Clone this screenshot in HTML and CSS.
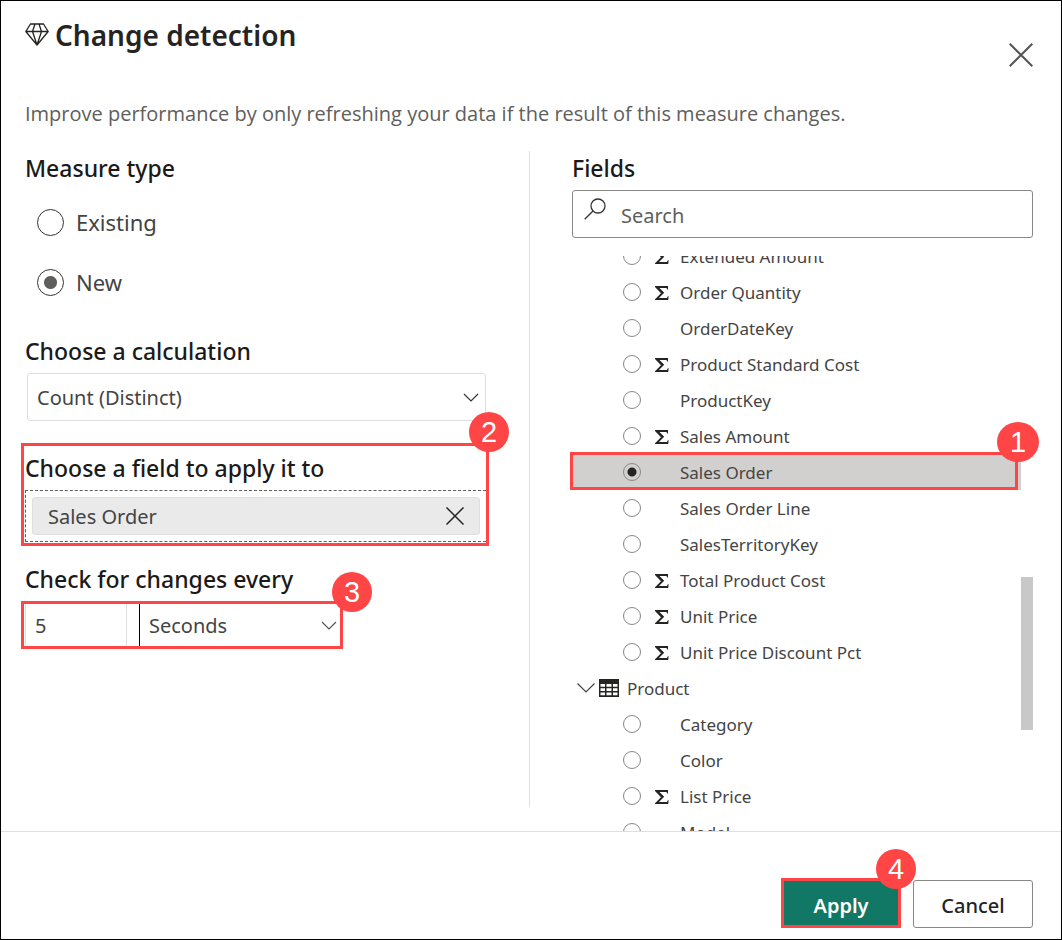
FILE: index.html
```html
<!DOCTYPE html>
<html lang="en">
<head>
<meta charset="utf-8">
<title>Change detection</title>
<link rel="stylesheet" href="styles.css">
</head>
<body>
<main class="dialog">
  <header class="header">
    <div class="title-group">
      <svg class="gem" viewBox="0 0 24 24" fill="none" stroke="#252423" stroke-width="1.3" stroke-linejoin="round"><path d="M5.500 1h13L23.200 8.500 12 22 .8 8.500zM.8 8.500h22.400M10 1 7.500 8.500 12 22M14 1l2.500 7.500L12 22"/></svg>
      <h1 class="title">Change detection</h1>
    </div>
    <button class="close" type="button" aria-label="Close"><svg viewBox="0 0 24 24" fill="none" stroke="#555" stroke-width="2"><path d="M.7.7l22.600 22.600M23.300.7.7 23.300"/></svg></button>
  </header>
  <p class="intro">Improve performance by only refreshing your data if the result of this measure changes.</p>

  <div class="body">
    <form class="settings">
      <section class="section measure" role="radiogroup" aria-labelledby="measure-heading">
        <h2 class="heading" id="measure-heading">Measure type</h2>
        <div class="options">
          <label class="option"><input class="radio" type="radio" name="measure">Existing</label>
          <label class="option"><input class="radio" type="radio" name="measure" checked>New</label>
        </div>
      </section>
      <section class="section calculation">
        <label class="heading" for="calc">Choose a calculation</label>
        <div class="dropdown boxed">
          <select class="select" id="calc"><option>Count (Distinct)</option></select>
          <svg class="chevron" viewBox="0 0 16 9" fill="none" stroke="#333" stroke-width="1.2"><path d="M1 1l7 7 7-7"/></svg>
        </div>
      </section>
      <section class="section target">
        <h2 class="heading">Choose a field to apply it to</h2>
        <div class="dropzone">
          <div class="chip">
            <span>Sales Order</span>
            <button class="chip-remove" type="button" aria-label="Remove Sales Order"><svg viewBox="0 0 18 18" fill="none" stroke="#252423" stroke-width="1.500"><path d="M.5.5l17 17M17.500.5l-17 17"/></svg></button>
          </div>
        </div>
        <div class="callout around-target"><span class="badge">2</span></div>
      </section>
      <section class="section interval">
        <label class="heading" for="every">Check for changes every</label>
        <div class="interval-row">
          <input class="amount" id="every" type="text" value="5">
          <div class="dropdown units">
            <select class="select" aria-label="Unit"><option>Seconds</option></select>
            <svg class="chevron" viewBox="0 0 16 9" fill="none" stroke="#555" stroke-width="1.2"><path d="M1 1l7 7 7-7"/></svg>
          </div>
          <div class="callout around-interval"><span class="badge">3</span></div>
        </div>
      </section>
    </form>

    <section class="fields">
      <label class="heading" for="search">Fields</label>
      <div class="search">
        <svg class="search-icon" viewBox="0 0 22 22" fill="none" stroke="#333" stroke-width="1.3"><circle cx="14" cy="8" r="7"/><path d="M9 13 .7 21.300"/></svg>
        <input class="search-input" id="search" type="text" placeholder="Search">
      </div>
      <div class="viewport">
        <div class="list">
          <label class="field"><input class="radio small" type="radio" name="field"><svg class="sigma" viewBox="0 0 14 14"><path d="M0 0h13v3.500h-.8L11.500 2H4.500l4.700 4.800L4 12h7.900l1-1.800h.8L13.200 14H0v-.8l6-6L0 .9z"/></svg><span>Extended Amount</span></label>
          <label class="field"><input class="radio small" type="radio" name="field"><svg class="sigma" viewBox="0 0 14 14"><path d="M0 0h13v3.500h-.8L11.500 2H4.500l4.700 4.800L4 12h7.900l1-1.800h.8L13.200 14H0v-.8l6-6L0 .9z"/></svg><span>Order Quantity</span></label>
          <label class="field"><input class="radio small" type="radio" name="field"><i class="sigma"></i><span>OrderDateKey</span></label>
          <label class="field"><input class="radio small" type="radio" name="field"><svg class="sigma" viewBox="0 0 14 14"><path d="M0 0h13v3.500h-.8L11.500 2H4.500l4.700 4.800L4 12h7.900l1-1.800h.8L13.200 14H0v-.8l6-6L0 .9z"/></svg><span>Product Standard Cost</span></label>
          <label class="field"><input class="radio small" type="radio" name="field"><i class="sigma"></i><span>ProductKey</span></label>
          <label class="field"><input class="radio small" type="radio" name="field"><svg class="sigma" viewBox="0 0 14 14"><path d="M0 0h13v3.500h-.8L11.500 2H4.500l4.700 4.800L4 12h7.900l1-1.800h.8L13.200 14H0v-.8l6-6L0 .9z"/></svg><span>Sales Amount</span></label>
          <label class="field selected"><input class="radio small" type="radio" name="field" checked><i class="sigma"></i><span>Sales Order</span><span class="callout around-field"><span class="badge">1</span></span></label>
          <label class="field"><input class="radio small" type="radio" name="field"><i class="sigma"></i><span>Sales Order Line</span></label>
          <label class="field"><input class="radio small" type="radio" name="field"><i class="sigma"></i><span>SalesTerritoryKey</span></label>
          <label class="field"><input class="radio small" type="radio" name="field"><svg class="sigma" viewBox="0 0 14 14"><path d="M0 0h13v3.500h-.8L11.500 2H4.500l4.700 4.800L4 12h7.900l1-1.800h.8L13.200 14H0v-.8l6-6L0 .9z"/></svg><span>Total Product Cost</span></label>
          <label class="field"><input class="radio small" type="radio" name="field"><svg class="sigma" viewBox="0 0 14 14"><path d="M0 0h13v3.500h-.8L11.500 2H4.500l4.700 4.800L4 12h7.900l1-1.800h.8L13.200 14H0v-.8l6-6L0 .9z"/></svg><span>Unit Price</span></label>
          <label class="field"><input class="radio small" type="radio" name="field"><svg class="sigma" viewBox="0 0 14 14"><path d="M0 0h13v3.500h-.8L11.500 2H4.500l4.700 4.800L4 12h7.900l1-1.800h.8L13.200 14H0v-.8l6-6L0 .9z"/></svg><span>Unit Price Discount Pct</span></label>
          <button class="group" type="button" aria-expanded="true">
            <svg class="group-chevron" viewBox="0 0 18 10" fill="none" stroke="#444" stroke-width="1.2"><path d="M.5.5 9 9 17.500.5"/></svg>
            <svg class="table-icon" viewBox="0 0 20 18"><path fill="#252423" d="M0 0h20v18H0z"/><path fill="#fff" d="M1.500 5H6v2.700H1.500zm6 0h5v2.700h-5zm6.500 0h4.500v2.700H14zM1.500 9.200H6v2.700H1.500zm6 0h5v2.700h-5zm6.500 0h4.500v2.700H14zM1.500 13.500H6v2.700H1.500zm6 0h5v2.700h-5zm6.500 0h4.500v2.700H14z"/></svg>
            <span>Product</span>
          </button>
          <label class="field"><input class="radio small" type="radio" name="field"><i class="sigma"></i><span>Category</span></label>
          <label class="field"><input class="radio small" type="radio" name="field"><i class="sigma"></i><span>Color</span></label>
          <label class="field"><input class="radio small" type="radio" name="field"><svg class="sigma" viewBox="0 0 14 14"><path d="M0 0h13v3.500h-.8L11.500 2H4.500l4.700 4.800L4 12h7.900l1-1.800h.8L13.200 14H0v-.8l6-6L0 .9z"/></svg><span>List Price</span></label>
          <label class="field"><input class="radio small" type="radio" name="field"><i class="sigma"></i><span>Model</span></label>
        </div>
        <div class="track"><div class="thumb"></div></div>
      </div>
    </section>
  </div>

  <footer class="footer">
    <div class="apply-wrap">
      <button class="button primary" type="button">Apply</button>
      <div class="callout around-apply"><span class="badge">4</span></div>
    </div>
    <button class="button" type="button">Cancel</button>
  </footer>
</main>
</body>
</html>
```
FILE: styles.css
```css
* { box-sizing: border-box; }
body {
  margin: 0;
  font-family: "Noto Sans", "Open Sans", sans-serif;
  font-size: 20px;
  color: #444;
  background: #fff;
}
button, input, select { font: inherit; color: inherit; }
button { padding: 0; border: 0; background: none; }
svg { display: block; flex: none; }

.dialog {
  display: flex;
  flex-direction: column;
  height: 100vh;
  border: 1px solid #000;
}
.header {
  display: flex;
  justify-content: space-between;
  align-items: flex-start;
  padding: 14px 28px 0 24px;
}
.title-group { display: flex; align-items: center; gap: 6px; }
.gem { width: 24px; height: 24px; }
.title { margin: 0; font-size: 28px; font-weight: 600; line-height: 40px; color: #252423; }
.close { margin-top: 28px; }
.close svg { width: 24px; height: 24px; }
.intro {
  margin: 32px 28px 22px 24px;
  font-family: "Open Sans", "Noto Sans", sans-serif;
  line-height: 30px;
  color: #605e5c;
}

.body {
  display: grid;
  grid-template-columns: 1fr 1fr;
  flex: 1;
  min-height: 0;
  padding: 0 28px 0 24px;
}
.heading {
  display: block;
  margin: 0 0 5px;
  font-size: 23px;
  font-weight: 500;
  line-height: 34px;
  color: #1b1a19;
}
.settings { margin: 0 -1px 24px 0; padding-right: 43px; border-right: 1px solid #e1dfdd; }
.section { position: relative; }
.options { padding: 2px 0 1px 12px; }
.option { display: flex; align-items: center; gap: 12px; height: 60px; font-size: 22px; }
.radio {
  appearance: none;
  flex: none;
  width: 27px;
  height: 27px;
  margin: 0;
  border: 1px solid #333;
  border-radius: 50%;
  background: #fff;
}
.radio:checked { background: radial-gradient(circle, #605e5c 6px, #fff 7px); }
.calculation { margin-top: 21px; }
.dropdown { position: relative; display: flex; }
.boxed { height: 48px; margin-left: 2px; border: 1px solid #e1dfdd; border-radius: 3px; }
.select {
  appearance: none;
  width: 100%;
  padding: 0 32px 0 9px;
  border: 0;
  background: transparent;
}
.chevron { position: absolute; right: 6px; top: 50%; width: 16px; height: 9px; margin-top: -4px; }
.target { margin-top: 30px; }
.dropzone { padding: 6px; border: 1px dashed #605e5c; border-right: 0; }
.chip {
  display: flex;
  align-items: center;
  justify-content: space-between;
  height: 38px;
  padding: 0 15px;
  border: 1px solid #e1dfdd;
  border-radius: 3px;
  background: #eaeaea;
}
.chip-remove svg { width: 18px; height: 18px; }
.interval { margin-top: 20px; }
.interval-row { position: relative; display: flex; width: 318px; height: 48px; }
.amount { width: 102px; padding: 0 9px; border: 1px solid #e1dfdd; background: #fff; }
.units { flex: 1; margin-left: 12px; border-left: 1px solid #000; }

.callout { position: absolute; border: 3px solid #ff4545; pointer-events: none; }
.badge {
  position: absolute;
  display: flex;
  align-items: center;
  justify-content: center;
  width: 40px;
  height: 40px;
  border-radius: 50%;
  background: #ff4545;
  color: #fff;
  font: 29px "Liberation Sans", sans-serif;
}
.around-target { inset: -8px -3px -4px -4px; }
.around-target .badge { top: -34px; right: -23px; }
.around-interval { inset: 0 0 0 -4px; }
.around-interval .badge { top: -32px; right: -32px; }
.around-field { inset: -2px 3px 0 -2px; }
.around-field .badge { top: -33px; right: -24px; width: 42px; }
.around-apply { inset: -2px 0 0 0; }
.around-apply .badge { top: -32px; right: -18px; }

.fields { display: flex; flex-direction: column; min-height: 0; padding-left: 43px; }
.search {
  display: flex;
  flex: none;
  gap: 15px;
  height: 48px;
  margin-bottom: 18px;
  padding-left: 11px;
  border: 1px solid #8a8886;
  border-radius: 3px;
}
.search-icon { width: 22px; height: 22px; margin-top: 7px; }
.search-input { flex: 1; min-width: 0; padding: 2px 0 0; border: 0; background: transparent; }
.search-input::placeholder { color: #605e5c; opacity: 1; }
.viewport { display: flex; flex: 1; min-height: 0; overflow-y: clip; overflow-x: visible; }
.list { flex: 1; margin-top: -18px; font-size: 17px; }
.field { position: relative; display: flex; align-items: center; height: 36px; padding-left: 51px; }
.field.selected { background: #d2d0ce; }
.small { width: 18px; height: 18px; border-color: #8a8886; }
.small:checked { background: radial-gradient(circle, #252423 4px, #d2d0ce 5px); }
.sigma { flex: none; width: 14px; height: 14px; margin: 2px 11px 0 14px; fill: #252423; }
.group { display: flex; align-items: center; height: 36px; padding-left: 5px; }
.group-chevron { width: 18px; height: 10px; margin-right: 4px; }
.table-icon { width: 20px; height: 18px; margin-right: 8px; }
.track { width: 12px; }
.thumb { height: 153px; margin-top: 321px; background: #c8c8c8; }

.footer {
  display: flex;
  justify-content: flex-end;
  gap: 12px;
  padding: 48px 28px 11px;
  border-top: 1px solid #e1dfdd;
}
.apply-wrap { position: relative; }
.button {
  width: 120px;
  height: 48px;
  padding-top: 2px;
  border: 1px solid #8a8886;
  border-radius: 3px;
  background: #fff;
  color: #252423;
  font-weight: 500;
}
.primary { border-color: #117865; background: #117865; color: #fff; font-weight: 600; }
```
